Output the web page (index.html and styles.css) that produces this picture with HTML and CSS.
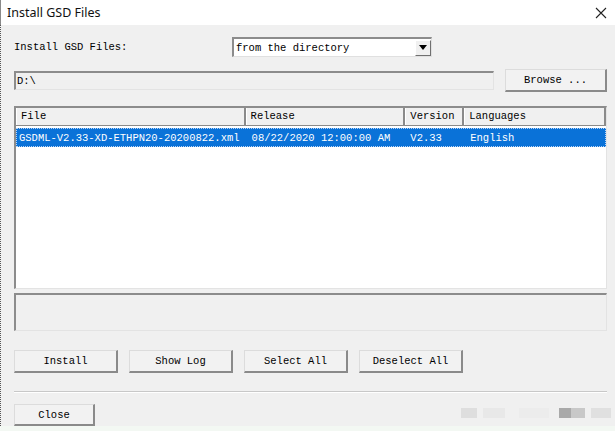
FILE: index.html
```html
<!DOCTYPE html>
<html>
<head>
<meta charset="utf-8">
<link rel="stylesheet" href="styles.css">
</head>
<body>
<div class="window">
  <div class="titlebar">
    <span class="title">Install GSD Files</span>
    <svg class="close" width="12" height="12" viewBox="0 0 12 12"><path d="M1 1L11 11M11 1L1 11" stroke="#222" stroke-width="1.1" fill="none"/></svg>
  </div>
  <div class="content">
    <div class="row row-source">
      <span class="label">Install GSD Files:</span>
      <div class="combo">
        <span class="combo-text">from the directory</span>
        <span class="combo-btn"><svg width="8" height="5" viewBox="0 0 8 5"><path d="M0 0H8L4 5Z" fill="#000"/></svg></span>
      </div>
    </div>
    <div class="row row-path">
      <div class="field path">D:\</div>
      <div class="btn browse">Browse ...</div>
    </div>
    <div class="list">
      <div class="list-head">
        <div class="col c1">File</div>
        <div class="col c2">Release</div>
        <div class="col c3">Version</div>
        <div class="col c4">Languages</div>
      </div>
      <div class="list-row selected">
        <div class="cell c1">GSDML-V2.33-XD-ETHPN20-20200822.xml</div>
        <div class="cell c2">08/22/2020 12:00:00 AM</div>
        <div class="cell c3">V2.33</div>
        <div class="cell c4">English</div>
      </div>
    </div>
    <div class="field status"></div>
    <div class="row row-actions">
      <div class="btn act">Install</div>
      <div class="btn act">Show Log</div>
      <div class="btn act">Select All</div>
      <div class="btn act">Deselect All</div>
    </div>
    <div class="separator"></div>
    <div class="row row-close">
      <div class="btn close-btn">Close</div>
      <div class="blur">
        <span class="b b1"></span><span class="b b2"></span><span class="b b3"></span><span class="b b4"></span><span class="b b5"></span><span class="b b6"></span>
      </div>
    </div>
  </div>
  <div class="footer-strip"></div>
</div>
</body>
</html>
```

FILE: styles.css
```css
* { box-sizing: border-box; }
html, body { margin: 0; padding: 0; }
body {
  width: 615px;
  height: 431px;
  overflow: hidden;
  background: #f0f0f0;
  font-family: "Liberation Mono", "DejaVu Sans Mono", monospace;
  font-size: 10.5px;
  color: #000;
}
.window {
  width: 615px;
  height: 431px;
  display: flex;
  flex-direction: column;
  position: relative;
}
.titlebar {
  height: 25px;
  background: #fff;
  display: flex;
  align-items: center;
  justify-content: space-between;
  padding: 0 8px 0 6px;
  border-left: 1px solid #8a8a8a;
}
.title {
  font-family: "Noto Sans", "Open Sans", sans-serif;
  font-size: 12.5px;
  color: #111;
}
.close { margin-top: 1px; }
.content {
  flex: 1;
  display: flex;
  flex-direction: column;
  padding: 12px 8px 0 13px;
  border-left: 1px dotted #555;
  overflow: hidden;
}
.row { display: flex; align-items: center; }
.row-source { height: 20px; }
.label { width: 218px; }
.combo {
  width: 200px;
  height: 20px;
  background: #fff;
  border-top: 2px solid #8c8c8c;
  border-left: 2px solid #8c8c8c;
  border-right: 1px solid #e0e0e0;
  border-bottom: 1px solid #e0e0e0;
  display: flex;
  align-items: center;
  justify-content: space-between;
  padding-left: 2px;
}
.combo-btn {
  width: 16px;
  height: 16px;
  background: #f0f0f0;
  border-right: 1px solid #707070;
  border-bottom: 1px solid #707070;
  border-top: 1px solid #fff;
  border-left: 1px solid #fff;
  display: flex;
  align-items: center;
  justify-content: center;
}
.row-path { margin-top: 12px; height: 24px; justify-content: space-between; }
.field {
  background: #f0f0f0;
  border-top: 2px solid #8c8c8c;
  border-left: 2px solid #8c8c8c;
  border-right: 1px solid #e3e3e3;
  border-bottom: 1px solid #e3e3e3;
}
.path {
  width: 480px;
  height: 19px;
  padding-left: 1px;
  line-height: 16px;
}
.btn {
  background: #f2f2f2;
  border-top: 1px solid #dcdcdc;
  border-left: 1px solid #dcdcdc;
  border-right: 2px solid #8a8a8a;
  border-bottom: 2px solid #8a8a8a;
  display: flex;
  align-items: center;
  justify-content: center;
}
.browse { width: 102px; height: 23px; }
.list {
  margin-top: 14px;
  height: 188px;
  background: #fff;
  border-top: 2px solid #8c8c8c;
  border-left: 2px solid #8c8c8c;
  border-right: 1px solid #e3e3e3;
  border-bottom: 1px solid #e3e3e3;
  display: flex;
  flex-direction: column;
}
.list-head {
  display: flex;
  height: 18px;
  background: #f0f0f0;
  border-bottom: 1px solid #8a8a8a;
}
.col {
  border-right: 2px solid #8a8a8a;
  border-left: 1px solid #fff;
  padding-left: 4px;
  line-height: 16px;
}
.c1 { width: 230px; }
.c2 { width: 160px; }
.c3 { width: 59px; }
.c4 { width: 142px; }
.list-row {
  display: flex;
  height: 19px;
  margin-top: 2px;
  align-items: center;
}
.selected {
  background: #0a72d8;
  color: #fff;
  outline: 1px dotted #b8d4f5;
  outline-offset: -1px;
}
.cell { padding-left: 6px; white-space: nowrap; overflow: hidden; }
.list-row .c1 { padding-left: 3px; }
.list-row .c3 { padding-left: 5px; }
.status {
  margin-top: 4px;
  height: 39px;
}
.row-actions {
  margin-top: 19px;
  gap: 11px;
  height: 23px;
}
.act { width: 104px; height: 23px; }
.separator {
  margin-top: 18px;
  height: 2px;
  border-top: 1px solid #c8c8c8;
  border-bottom: 1px solid #fff;
}
.row-close {
  margin-top: 11px;
  justify-content: space-between;
  align-items: flex-start;
}
.close-btn { width: 81px; height: 22px; }
.blur {
  display: flex;
  align-items: center;
  margin-top: 4px;
  margin-right: -4px;
}
.b { display: inline-block; height: 10px; }
.b1 { width: 16px; background: #dedede; }
.b2 { width: 22px; background: #e8e8e8; margin-left: 6px; }
.b3 { width: 30px; background: #ececec; margin-left: 14px; }
.b4 { width: 12px; background: #a9a9a9; margin-left: 10px; }
.b5 { width: 14px; background: #c8c8c8; }
.b6 { width: 20px; background: #e0e0e0; margin-left: 6px; }
.footer-strip {
  height: 5px;
  background: #f3f8f3;
}
```
